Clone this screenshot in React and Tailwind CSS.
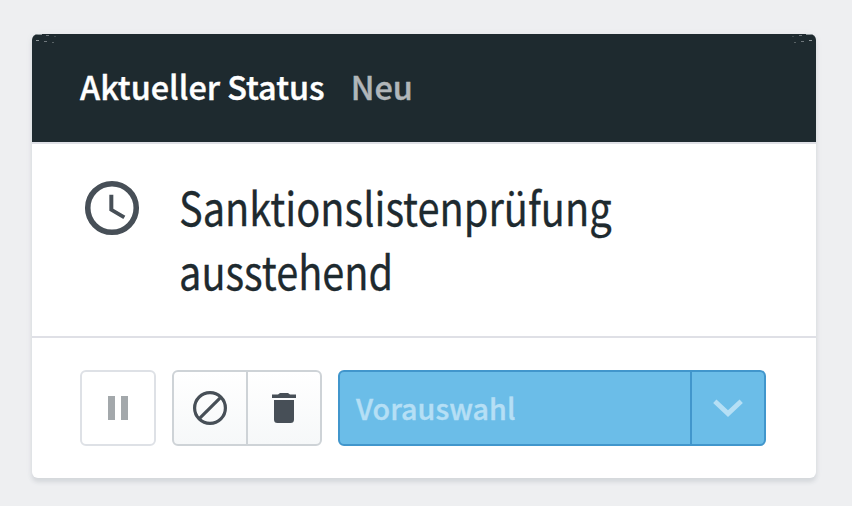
function CornerMarks({ className }) {
  return (
    <svg className={className} width="24" height="10" viewBox="0 0 24 10" fill="#91999c">
      <rect x="3" y="0" width="7" height="1" />
      <rect x="14" y="1" width="3" height="1" opacity=".7" />
      <rect x="22" y="2" width="2" height="1" opacity=".3" />
      <rect x="4" y="6" width="3" height="1" />
      <rect x="12" y="7" width="3" height="1" opacity=".7" />
      <rect x="20" y="8" width="2" height="1" opacity=".5" />
    </svg>
  );
}

function ClockIcon() {
  return (
    <svg className="h-16 w-16 shrink-0" viewBox="0 0 24 24" fill="none">
      <circle cx="12" cy="12" r="9.1" stroke="#474f57" strokeWidth="2.1" />
      <path d="M12.5 7H11v6l5.25 3.15.75-1.23-4.5-2.67z" fill="#474f57" />
    </svg>
  );
}

function PauseIcon() {
  return (
    <svg width="20" height="24" viewBox="0 0 20 24" fill="#a3a8ab">
      <rect width="7" height="24" />
      <rect x="13" width="7" height="24" />
    </svg>
  );
}

function BanIcon() {
  return (
    <svg width="34" height="34" viewBox="0 0 34 34" fill="none" stroke="#474f57" strokeWidth="3.2">
      <circle cx="17" cy="17" r="15.4" />
      <path d="M6.3 27.7 27.7 6.3" />
    </svg>
  );
}

function TrashIcon() {
  return (
    <svg width="24" height="30" viewBox="0 0 24 30" fill="#474f57">
      <path d="M0 1.6h6L8 0h8l2 1.6h6V5H0z" />
      <path d="M2 7h20v19.5a3.5 3.5 0 0 1-3.5 3.5h-13A3.5 3.5 0 0 1 2 26.5z" />
    </svg>
  );
}

function ChevronIcon() {
  return (
    <svg width="30" height="18" viewBox="0 0 30 18" fill="none">
      <path d="M1.8 2.2 15 14.6 28.2 2.2" stroke="#b5dff5" strokeWidth="4.8" />
    </svg>
  );
}

export default function App() {
  return (
    <div className="h-[506px] w-[852px] bg-[#eeeff1] px-8 pt-[34px] font-['Noto_Sans_CJK_JP','Noto_Sans',sans-serif]">
      <div className="h-[444px] w-[784px] overflow-hidden rounded-md bg-white shadow-[0_4px_4px_#d5d8dc,0_1px_6px_#e2e4e7]">
        {/* Header */}
        <div className="relative flex h-[108px] items-center bg-[#1e2a2f] px-12 pb-1 text-[32.4px] leading-[48px] font-medium">
          <CornerMarks className="absolute top-0 left-0" />
          <CornerMarks className="absolute top-0 right-0 -scale-x-100" />
          <span className="whitespace-nowrap text-white [-webkit-text-stroke:0.4px_white]">
            Aktueller Status
          </span>
          <span className="ml-[26px] text-[#b1b6b9] [-webkit-text-stroke:0.4px_#b1b6b9]">Neu</span>
        </div>

        {/* Current step */}
        <div className="flex h-[196px] gap-9 border-y-2 border-[#dfe0e6] pt-8 pl-12">
          <ClockIcon />
          <h1 className="-mt-0.5 -ml-px origin-left scale-x-[0.864] text-[46px] leading-[64px] font-normal whitespace-nowrap text-[#1e2a2f] [-webkit-text-stroke:0.3px_#1e2a2f]">
            Sanktionslistenprüfung
            <br />
            ausstehend
          </h1>
        </div>

        {/* Actions */}
        <div className="flex gap-4 px-12 pt-8">
          <button className="flex h-[76px] w-[76px] items-center justify-center rounded-md border-2 border-[#dee1e6]">
            <PauseIcon />
          </button>
          <div className="flex h-[76px] w-[150px] rounded-md border-2 border-[#ced3d7] bg-linear-to-b from-white to-[#f6f8f9]">
            <button className="flex w-[74px] items-center justify-center border-r-2 border-[#ced3d7]">
              <BanIcon />
            </button>
            <button className="flex flex-1 items-center justify-center">
              <TrashIcon />
            </button>
          </div>
          <div className="flex h-[76px] w-[428px] rounded-md border-2 border-[#4196cc] bg-[#6bbde8] text-[#b5dff5]">
            <button className="flex w-[352px] items-center border-r-2 border-[#4196cc] pl-4 text-[28.7px] leading-[42px] font-medium [-webkit-text-stroke:0.4px_#b5dff5]">
              Vorauswahl
            </button>
            <button className="flex flex-1 items-center justify-center">
              <ChevronIcon />
            </button>
          </div>
        </div>
      </div>
    </div>
  );
}
